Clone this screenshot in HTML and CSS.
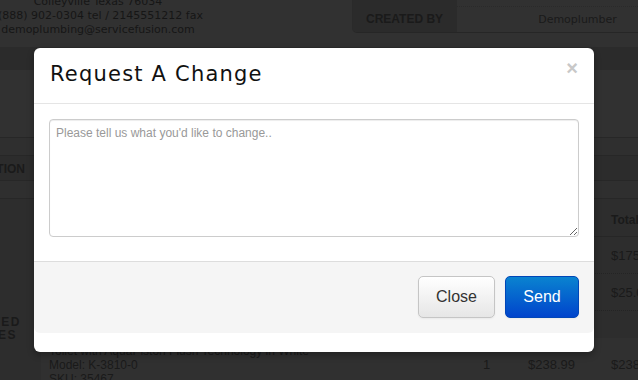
FILE: index.html
```html
<!DOCTYPE html>
<html>
<head>
<meta charset="utf-8">
<link rel="stylesheet" href="styles.css">
</head>
<body>
<div class="page">
  <div class="top">
    <div class="address">
      <div>Colleyville Texas 76034</div>
      <div>(888) 902-0304 tel / 2145551212 fax</div>
      <div>demoplumbing@servicefusion.com</div>
    </div>
    <div class="meta">
      <div class="meta-label prev"></div>
      <div class="meta-value prev"></div>
      <div class="meta-label">CREATED BY</div>
      <div class="meta-value">Demoplumber</div>
    </div>
  </div>
  <div class="band"></div>
  <div class="blank"></div>
  <div class="row r1"></div>
  <div class="row r2"><span class="th">DESCRIPTION</span></div>
  <div class="row r3"></div>
  <div class="lower">
    <div class="side"><span class="side-l1">TED</span><span class="side-l2">ES</span></div>
    <div class="items">
      <div class="irow ihead"><span class="c-desc"></span><span class="c-qty"></span><span class="c-price"></span><span class="c-total th">Total</span></div>
      <div class="irow dotted"><span class="c-desc"></span><span class="c-qty"></span><span class="c-price"></span><span class="c-total">$175.00</span></div>
      <div class="irow dotted"><span class="c-desc"></span><span class="c-qty"></span><span class="c-price"></span><span class="c-total">$25.00</span></div>
      <div class="irow spacer"></div>
      <div class="irow product">
        <span class="c-desc">Toilet with AquaPiston Flush Technology in White<br>Model: K-3810-0<br>SKU: 35467</span>
        <span class="c-qty">1</span>
        <span class="c-price">$238.99</span>
        <span class="c-total">$238.99</span>
      </div>
    </div>
  </div>

  <div class="modal">
    <div class="modal-header">
      <h3 class="modal-title">Request A Change</h3>
      <span class="modal-close">×</span>
    </div>
    <div class="modal-body">
      <textarea class="change-text" placeholder="Please tell us what you'd like to change.."></textarea>
    </div>
    <div class="modal-footer">
      <button class="btn btn-default">Close</button>
      <button class="btn btn-primary">Send</button>
    </div>
  </div>
</div>
</body>
</html>
```
FILE: styles.css
```css
* { box-sizing: border-box; }
html, body { margin: 0; padding: 0; }
body {
  width: 638px;
  height: 380px;
  overflow: hidden;
  background: #313131;
  font-family: "Liberation Sans", Arial, sans-serif;
  color: #1a1a1a;
}
.page {
  position: relative;
  width: 638px;
  height: 380px;
  overflow: hidden;
}
.top {
  height: 47px;
  display: flex;
  justify-content: space-between;
  align-items: flex-start;
}
.address {
  width: 200px;
  margin-left: -2px;
  margin-top: -5px;
  text-align: center;
  font-family: "DejaVu Sans", Verdana, sans-serif;
  font-size: 11px;
  line-height: 14px;
  white-space: nowrap;
  color: #161616;
}
.meta {
  width: 286px;
  display: grid;
  grid-template-columns: 104px 1fr;
  grid-template-rows: 7px 25px;
  border-bottom: 1px solid #262626;
  border-left: 1px solid #2a2a2a;
  border-bottom-left-radius: 5px;
  overflow: hidden;
}
.meta-label {
  background: #2b2b2b;
  font-weight: bold;
  font-size: 12px;
  line-height: 25px;
  padding-left: 13px;
}
.meta-value {
  padding-left: 60px;
  text-align: center;
  font-family: "DejaVu Sans", Verdana, sans-serif;
  font-size: 11px;
  line-height: 25px;
}
.meta-value.prev { border-bottom: 1px dotted #2a2a2a; }
.band { height: 23px; background: #2b2b2b; }
.blank { height: 67px; }
.row { border-top: 1px solid #272727; }
.r1 { height: 18px; background: #2f2f2f; }
.r2 { height: 25px; background: #2c2c2c; line-height: 24px; }
.r3 { height: 19px; background: #2f2f2f; border-bottom: 1px solid #272727; }
.th { font-weight: bold; font-size: 12px; }
.r2 .th { display: inline-block; margin-left: -57px; }
.lower {
  display: grid;
  grid-template-columns: 41px 1fr;
  background: #2d2d2d;
}
.side {
  display: flex;
  flex-direction: column;
  align-items: flex-end;
  padding-top: 117px;
  font-weight: bold;
  font-size: 12px;
  line-height: 13px;
  letter-spacing: 1.5px;
}
.side-l1 { margin-right: 20px; }
.side-l2 { margin-right: 24px; }
.items { display: flex; flex-direction: column; }
.irow {
  display: grid;
  grid-template-columns: 429px 54px 81px 1fr;
  align-items: center;
  font-size: 13px;
}
.irow > span { padding-left: 8px; }
.irow > .c-total { padding-left: 6px; }
.irow > .c-qty { padding-left: 13px; }
.irow > .c-price { padding-left: 4px; }
.ihead { height: 38px; border-bottom: 1px solid #262626; padding-top: 4px; }
.dotted { height: 37px; border-bottom: 1px dotted #242424; }
.spacer { height: 27px; }
.product {
  background: #303030;
  padding: 6px 0 2px 0;
  line-height: 14px;
  font-size: 12px;
}
.product .c-total, .product .c-price, .product .c-qty { font-size: 13px; }

/* modal */
.modal {
  position: absolute;
  left: 34px;
  top: 48px;
  width: 560px;
  height: 304px;
  background: #fff;
  border-radius: 6px;
  box-shadow: 0 3px 7px rgba(0,0,0,0.3);
  display: flex;
  flex-direction: column;
}
.modal-header {
  height: 56px;
  border-bottom: 1px solid #e5e5e5;
  display: flex;
  justify-content: space-between;
  align-items: flex-start;
  padding: 0 16px;
}
.modal-title {
  margin: 0;
  padding-top: 13px;
  font-family: "DejaVu Sans", Verdana, sans-serif;
  font-weight: normal;
  font-size: 21px;
  letter-spacing: 1.2px;
  line-height: 26px;
  color: #111;
}
.modal-close {
  padding-top: 8px;
  font-family: "Liberation Sans", Arial, sans-serif;
  font-weight: bold;
  font-size: 20px;
  line-height: 24px;
  color: #c8c8c8;
}
.modal-body {
  padding: 15px 15px 24px 15px;
}
.change-text {
  display: block;
  width: 530px;
  height: 118px;
  margin: 0;
  padding: 5px 6px;
  border: 1px solid #cccccc;
  border-radius: 4px;
  box-shadow: inset 0 1px 1px rgba(0,0,0,0.075);
  font-family: "Liberation Sans", Arial, sans-serif;
  font-size: 12px;
  line-height: 16px;
  color: #555;
}
.change-text::placeholder { color: #999; }
.modal-footer {
  height: 72px;
  background: #f5f5f5;
  border-top: 1px solid #dddddd;
  border-radius: 0 0 6px 6px;
  display: flex;
  justify-content: flex-end;
  gap: 10px;
  padding: 14px 15px 0 0;
}
.btn {
  height: 42px;
  border-radius: 5px;
  font-family: "Liberation Sans", Arial, sans-serif;
  font-size: 16px;
  padding: 0;
  cursor: pointer;
}
.btn-default {
  width: 77px;
  color: #333;
  background: linear-gradient(#ffffff, #e6e6e6);
  border: 1px solid #c5c5c5;
  box-shadow: inset 0 1px 0 rgba(255,255,255,0.2), 0 1px 2px rgba(0,0,0,0.05);
}
.btn-primary {
  width: 74px;
  color: #fff;
  background: linear-gradient(#0a83d0, #0044cc);
  border: 1px solid #0046b8;
  box-shadow: 0 1px 2px rgba(0,0,0,0.05);
}
```
